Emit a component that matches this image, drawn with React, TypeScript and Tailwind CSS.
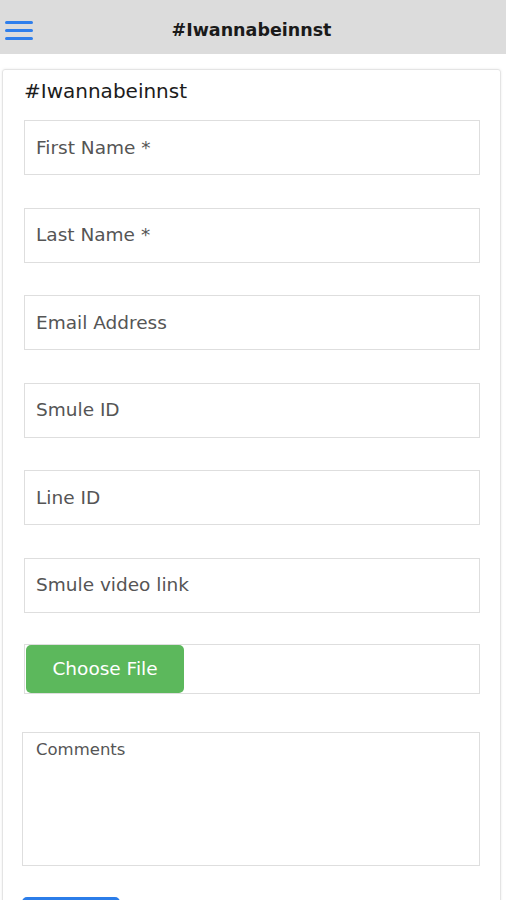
import React from "react";

const fields = ["First Name *", "Last Name *", "Email Address", "Smule ID", "Line ID", "Smule video link"];

export default function App() {
  return (
    <div className="w-full h-[900px] overflow-hidden bg-white font-['DejaVu_Sans',sans-serif]">
      <header className="h-[54px] bg-[#dcdcdc] grid grid-cols-[1fr_auto_1fr] items-center pt-[6px]">
        <div className="pl-[5px] flex flex-col gap-[5px] w-[34px]">
          <span className="block h-[3px] w-[28px] rounded-full bg-[#2f7fec]" />
          <span className="block h-[3px] w-[28px] rounded-full bg-[#2f7fec]" />
          <span className="block h-[3px] w-[28px] rounded-full bg-[#2f7fec]" />
        </div>
        <div className="text-[17.5px] font-bold text-[#1a1a1a] -ml-[3px]">#Iwannabeinnst</div>
        <div />
      </header>
      <div className="ml-[2px] mt-[15px] w-[499px] border border-[#e4e4e4] rounded-[3px] shadow-[0_0_3px_rgba(0,0,0,0.08)] pl-[21px] pr-[20px] pt-[8px] pb-[40px]">
        <div className="text-[20px] leading-[26px] text-[#1c1c1c]">#Iwannabeinnst</div>
        <div className="mt-[16px] flex flex-col gap-[32.5px]">
          {fields.map((f) => (
            <div key={f} className="h-[55px] border border-[#dedede] flex items-center pl-[11px] text-[18.5px] text-[#555]">
              {f}
            </div>
          ))}
          <div className="-mt-[1px] h-[50px] border border-[#dedede] flex items-stretch">
            <div className="w-[158px] ml-[1px] rounded-[5px] bg-[#5cb85c] text-white text-[18.5px] flex items-center justify-center">
              Choose File
            </div>
          </div>
        </div>
        <div className="mt-[38px] -ml-[2px] w-[458px] h-[134px] border border-[#dedede] pl-[13px] pt-[5px] text-[16.5px] text-[#555]">
          Comments
        </div>
        <div className="mt-[31px] -ml-[2px] w-[98px] h-[40px] rounded-[5px] bg-[#2b7de9]" />
      </div>
    </div>
  );
}
